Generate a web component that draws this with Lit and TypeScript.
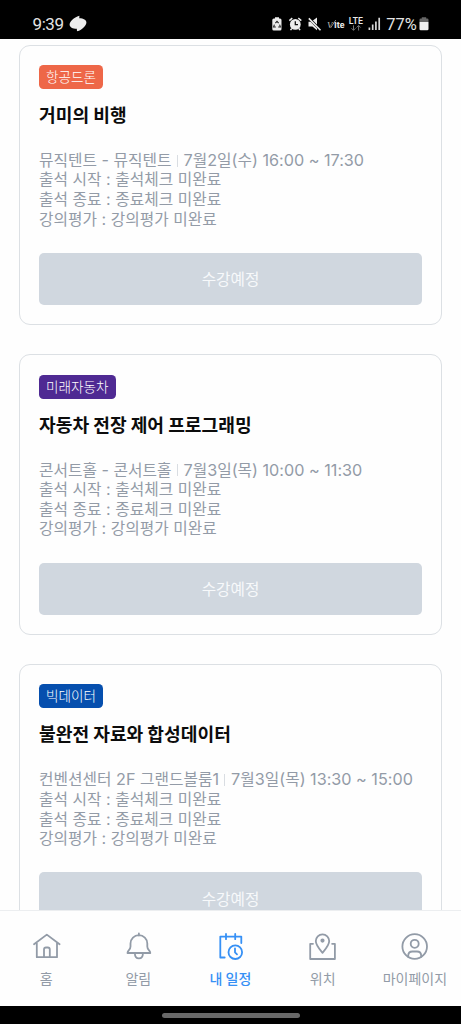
import { LitElement, html, svg, css } from "lit";
import { customElement, property } from "lit/decorators.js";

interface Lecture {
  tag: string;
  color: string;
  title: string;
  place: string;
  time: string;
}

const LECTURES: Lecture[] = [
  { tag: "항공드론", color: "#ee6748", title: "거미의 비행", place: "뮤직텐트 - 뮤직텐트", time: "7월2일(수) 16:00 ~ 17:30" },
  { tag: "미래자동차", color: "#4f2a93", title: "자동차 전장 제어 프로그래밍", place: "콘서트홀 - 콘서트홀", time: "7월3일(목) 10:00 ~ 11:30" },
  { tag: "빅데이터", color: "#064fae", title: "불완전 자료와 합성데이터", place: "컨벤션센터 2F 그랜드볼룸1", time: "7월3일(목) 13:30 ~ 15:00" },
];

// Hangul runs are set slightly smaller than the Latin runs beside them.
const mixed = (text: string) =>
  text.split(/([가-힣]+)/).filter(Boolean).map((run) =>
    /[가-힣]/.test(run) ? html`<span class="ko">${run}</span>` : run
  );

@customElement("status-bar")
class StatusBar extends LitElement {
  static styles = css`
    :host { display: flex; align-items: center; height: 39px; flex: none; background: #000; color: #e4e4e4; padding: 8px 31px 0 32.500px; box-sizing: border-box; font-family: Roboto, sans-serif; }
    .time { font-size: 17px; line-height: 20px; letter-spacing: -0.4px; width: 36.500px; }
    .grow { flex: 1; }
    svg { display: block; flex: none; }
  `;
  render() {
    return html`
      <span class="time">9:39</span>
      <svg width="18" height="17" viewBox="0 0 18 17" fill="#ececec"><path d="M10.400 .7L10.300 3.200C14.500 3.200 17.400 5 17.400 7.400C17.400 9.800 13.800 14.600 8 16.300L7.800 13.800C3.600 13.800 .6 12 .6 9.400C.6 6.800 4.600 2.300 10.400 .7z"/></svg>
      <span class="grow"></span>
      <svg width="154" height="18" viewBox="271 15 154 18">
        <path d="M275 17.200h4v1.300h1q1.500 0 1.500 1.500v9q0 1.500-1.500 1.500h-6.200q-1.500 0-1.500-1.500v-9q0-1.500 1.500-1.500h1.200z" fill="#ececec"/>
        <path d="M275.400 23.200l1.600-1.900 1.600 1.900M279.600 24.600l.8 2.400h-2.200M275.800 27h-2.200l.8-2.400" fill="none" stroke="#222" stroke-width="1.100"/>
        <circle cx="295.300" cy="24.400" r="5.400" fill="#ececec"/>
        <path d="M289.300 20.600l3-2.400M301.300 20.600l-3-2.400M291.800 28.500l-1.300 1.600M298.800 28.500l1.300 1.600" stroke="#ececec" stroke-width="1.500"/>
        <path d="M295.300 21.300v3.400h2.700" fill="none" stroke="#111" stroke-width="1.300"/>
        <path d="M308.500 21.800h2.600l5.900-4.300v12.700l-4.600-3.600h-3.900z" fill="#ececec"/>
        <path d="M308.200 17.300l12.500 13" stroke="#000" stroke-width="2.600"/>
        <path d="M308.800 18.400l11.700 11.800" stroke="#ececec" stroke-width="1.600"/>
        <text x="327" y="27.500" font-family="Liberation Serif, serif" font-style="italic" font-size="9" fill="#bbb">V</text>
        <path d="M330.500 28l5.300-8" stroke="#aaa" stroke-width=".8"/>
        <text x="334.300" y="27.500" font-family="Inter, sans-serif" font-weight="800" font-size="7.600" textLength="10.200" lengthAdjust="spacingAndGlyphs" fill="#e8e8e8">lte</text>
        <text x="348.700" y="23.500" font-family="Inter, sans-serif" font-weight="600" font-size="8.500" textLength="14.500" fill="#e8e8e8">LTE</text>
        <path d="M353.500 25.300v5M351.500 28.300l2 2 2-2M358.600 30.500v-5M356.600 27.500l2-2 2 2" fill="none" stroke="#777" stroke-width="1"/>
        <path d="M369.400 27.500v2.500M372.700 24.500v5.500M375.900 21.500v8.500M379.200 17.800v12.200" stroke="#d8d8d8" stroke-width="1.700"/>
        <text x="386.200" y="29.500" font-family="Roboto, sans-serif" font-size="17" textLength="30.500" lengthAdjust="spacingAndGlyphs" fill="#e4e4e4">77%</text>
      </svg>
      <svg width="5" height="18" viewBox="425 15 5 18" overflow="visible">
        <path d="M419.500 22v-2.200q0-1.300 1.300-1.300h1v-1.200h4.400v1.200h1q1.300 0 1.300 1.300v2.200z" fill="#666"/>
        <path d="M419.500 22h9v7q0 1.300-1.300 1.300h-6.400q-1.300 0-1.300-1.300z" fill="#f0f0f0"/>
      </svg>
    `;
  }
}

@customElement("lecture-card")
class LectureCard extends LitElement {
  @property({ attribute: false }) lecture!: Lecture;
  static styles = css`
    :host { display: flex; flex-direction: column; align-items: flex-start; box-sizing: border-box; height: 280.800px; flex: none; padding: 19.300px 19px 19px; border: 1px solid #dce0e4; border-radius: 11px; background: #fefefe; }
    .tag { height: 24px; line-height: 22px; padding: 0 7px; border-radius: 4.500px; color: #fff; font-size: 13.600px; font-weight: 300; white-space: nowrap; }
    .title { margin: 14px 0 0; font-size: 18.150px; line-height: 22px; font-weight: 700; color: #0c0c0c; white-space: nowrap; }
    .info { margin-top: 26px; font-family: Inter, "Noto Sans CJK KR", sans-serif; font-size: 16.200px; line-height: 19.600px; color: #939ba7; }
    .row { height: 19.600px; white-space: nowrap; display: flex; align-items: center; }
    .row > span { white-space: pre; }
    .ko { font-size: 15.750px; }
    .bar { width: 1px; height: 12px; background: #d9dde2; margin: 0 6px 0 5px; }
    .button { margin-top: auto; align-self: stretch; height: 52.500px; border: 0; border-radius: 5px; background: #d0d7df; color: #f7f9fb; font: 400 15.700px "Noto Sans CJK KR", sans-serif; padding: 0 0 1px; }
  `;
  render() {
    const l = this.lecture;
    return html`
      <span class="tag" style="background:${l.color}">${l.tag}</span>
      <h2 class="title">${l.title}</h2>
      <div class="info">
        <div class="row"><span>${mixed(l.place)}</span><i class="bar"></i><span>${mixed(l.time)}</span></div>
        <div class="row"><span>${mixed("출석 시작 : 출석체크 미완료")}</span></div>
        <div class="row"><span>${mixed("출석 종료 : 종료체크 미완료")}</span></div>
        <div class="row"><span>${mixed("강의평가 : 강의평가 미완료")}</span></div>
      </div>
      <button class="button">수강예정</button>
    `;
  }
}

const TABS = [
  { label: "홈", icon: svg`<path d="M2 12.300L14.800 2.600l12.800 9.700M4.800 11v14.200h20.200v-14.200M12 25v-7.500q0-2 2-2h1.800q2 0 2 2V25"/>` },
  { label: "알림", icon: svg`<path d="M14.900 1.500v2M3.500 21c0-3 3-3 3-6.500v-3a8.400 8.400 0 0 1 16.800 0v3c0 3.500 3 3.500 3 6.500zM10.900 21.500c0 6.500 8 6.500 8 0"/>` },
  { label: "내 일정", active: true, icon: svg`<path d="M8.700 25.500h-4.400v-20.900h21v6.400M10 2v5.200M19.200 2v5.200"/><circle cx="19.300" cy="20.200" r="6.800"/><path d="M19 16.500v3.900l2 1.900"/>` },
  { label: "위치", icon: svg`<path d="M5 11.800h-2.800v15.200h24.700v-15.200h-2.800M14.500 20.800c-3.400-4-6.700-7.500-6.700-11.700a6.700 6.700 0 0 1 13.400 0c0 4.200-3.300 7.700-6.700 11.700z"/><circle cx="14.500" cy="8.600" r="1.200" fill="currentColor"/>` },
  { label: "마이페이지", icon: svg`<circle cx="14.700" cy="14.500" r="12.300"/><circle cx="14.700" cy="11.800" r="4"/><path d="M8.200 24.800v-1q0-4.300 4.300-4.300h4.400q4.300 0 4.300 4.300v1"/>` },
];

@customElement("tab-bar")
class TabBar extends LitElement {
  static styles = css`
    :host { display: grid; grid-template-columns: repeat(5, 1fr); height: 96px; flex: none; box-sizing: border-box; border-top: 1px solid #eceef0; background: #fefefe; }
    .tab { display: flex; flex-direction: column; align-items: center; padding-top: 21px; color: #929ba7; font-size: 14px; line-height: 20px; white-space: nowrap; }
    .tab svg { display: block; width: 29px; height: 29px; margin-bottom: 6.500px; fill: none; stroke: currentColor; stroke-width: 1.800; stroke-linejoin: round; stroke-linecap: round; }
    .active { color: #3690f5; font-weight: 500; }
  `;
  render() {
    return TABS.map((t) => html`<div class="tab ${t.active ? "active" : ""}"><svg viewBox="0 0 29 29">${t.icon}</svg><span>${t.label}</span></div>`);
  }
}

@customElement("app-root")
class AppRoot extends LitElement {
  static styles = css`
    :host { display: flex; flex-direction: column; height: 1024px; overflow: hidden; background: #fefefe; font-family: "Noto Sans CJK KR", sans-serif; }
    .list { flex: 1; min-height: 0; overflow: hidden; display: flex; flex-direction: column; gap: 29px; padding: 5.600px 19px 0; }
    .home { height: 18px; flex: none; background: #000; display: flex; justify-content: center; align-items: center; }
    .pill { width: 138px; height: 5px; border-radius: 3px; background: #686868; }
  `;
  render() {
    return html`
      <status-bar></status-bar>
      <main class="list">${LECTURES.map((l) => html`<lecture-card .lecture=${l}></lecture-card>`)}</main>
      <tab-bar></tab-bar>
      <div class="home"><div class="pill"></div></div>
    `;
  }
}
